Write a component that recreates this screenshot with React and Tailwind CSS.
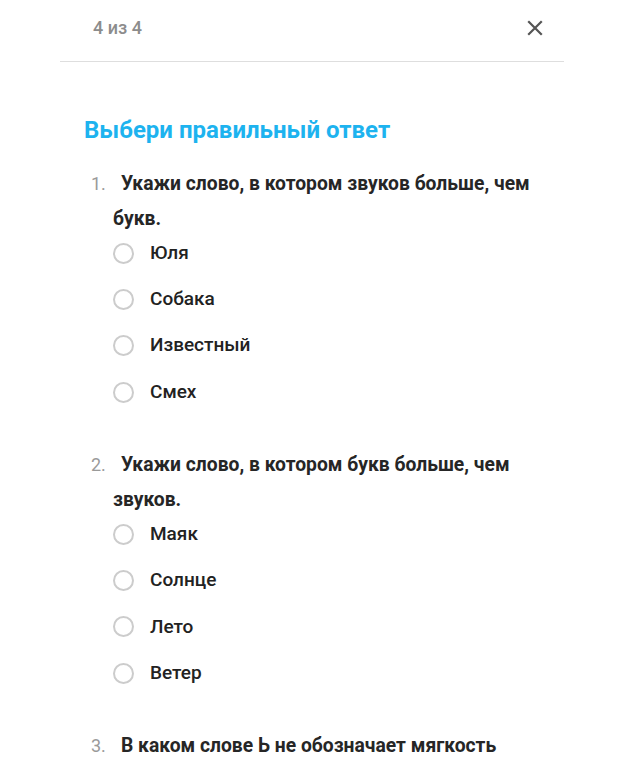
import React from "react";

const questions = [
  {
    n: "1.",
    text: "Укажи слово, в котором звуков больше, чем букв.",
    options: ["Юля", "Собака", "Известный", "Смех"],
  },
  {
    n: "2.",
    text: "Укажи слово, в котором букв больше, чем звуков.",
    options: ["Маяк", "Солнце", "Лето", "Ветер"],
  },
  {
    n: "3.",
    text: "В каком слове Ь не обозначает мягкость",
    options: [],
  },
];

function Radio() {
  return <span className="inline-block w-[21px] h-[21px] rounded-full border-2 border-[#cccccc] bg-white shrink-0" />;
}

export default function App() {
  return (
    <div className="w-[624px] h-[763px] overflow-hidden bg-white text-[#262626]" style={{ fontFamily: "Roboto, 'Noto Sans', sans-serif" }}>
      <div className="mx-[60px] h-[62px] border-b border-[#dedede] flex items-center justify-between pb-[6px]">
        <span className="ml-[33px] text-[18px] font-medium text-[#8c8c8c]">4 из 4</span>
        <svg className="mr-[21px]" width="16" height="16" viewBox="0 0 16 16" fill="none" stroke="#555" strokeWidth="2.2" strokeLinecap="square">
          <path d="M2 2 L14 14 M14 2 L2 14" />
        </svg>
      </div>
      <div className="pl-[84px] pr-[40px]">
        <h1 className="mt-[52px] text-[24px] leading-[32px] font-bold text-[#1db3ef]">Выбери правильный ответ</h1>
        <div className="mt-[20px] pl-[7px]">
          {questions.map((q, i) => (
            <div key={i} className={i === 0 ? "" : "mt-[32px]"}>
              <p className="pl-[22px] -indent-[22px] text-[19.3px] leading-[35px] font-bold pr-[20px]">
                <span className="inline-block indent-0 w-[30px] font-normal text-[18px] text-[#9a9a9a]">{q.n}</span>
                {q.text}
              </p>
              <div className="pl-[22px] -mt-[6px] flex flex-col">
                {q.options.map((o) => (
                  <label key={o} className="h-[46.3px] flex items-center gap-[16px]">
                    <Radio />
                    <span className="text-[19px] font-medium text-[#222]">{o}</span>
                  </label>
                ))}
              </div>
            </div>
          ))}
        </div>
      </div>
    </div>
  );
}
